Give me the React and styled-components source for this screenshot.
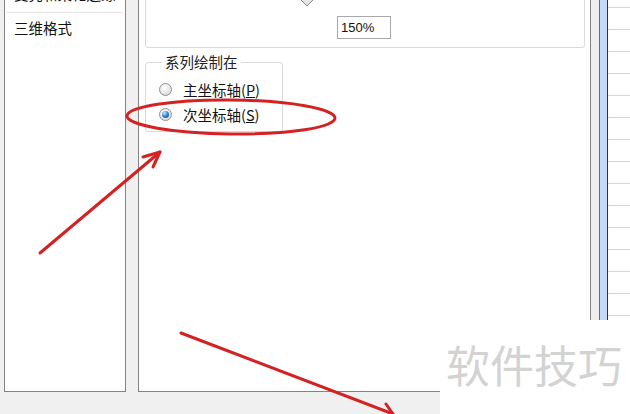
import React from 'react';
import styled, { createGlobalStyle } from 'styled-components';

const GlobalStyle = createGlobalStyle`
  html, body {
    margin: 0;
    padding: 0;
    background: #f0f0f0;
  }
  body {
    font-family: "Noto Sans CJK SC", "Liberation Sans", sans-serif;
  }
`;

const Page = styled.div`
  position: relative;
  width: 630px;
  height: 414px;
  overflow: hidden;
  display: flex;
  align-items: flex-start;
  background: #f0f0f0;
  color: #111;
  font-size: 14px;
`;

const NavPanel = styled.div`
  box-sizing: border-box;
  width: 122px;
  height: 392px;
  margin-left: 4px;
  background: #fff;
  border: 1px solid #838383;
  border-top: none;
  overflow: hidden;
`;

const NavList = styled.ul`
  list-style: none;
  margin: -21px 0 0;
  padding: 0;
`;

const NavItem = styled.li`
  margin: 0 2px;
  padding: 5px 0 ${(p) => (p.$divider ? '8px' : '5px')} 7px;
  line-height: 20px;
  font-size: 14.5px;
  white-space: nowrap;
  border-bottom: 1px solid ${(p) => (p.$divider ? '#e4e4e4' : 'transparent')};
`;

const ContentPanel = styled.div`
  box-sizing: border-box;
  width: 453px;
  height: 392px;
  margin-left: 12px;
  background: #fff;
  border: 1px solid #838383;
  border-top: none;
  display: flex;
  flex-direction: column;
  align-items: flex-start;
`;

const TopGroup = styled.div`
  box-sizing: border-box;
  width: 440px;
  margin: -30px 0 0 6px;
  border: 1px solid #d9d9d9;
  border-radius: 3px;
  padding-bottom: 8px;
`;

const SliderRow = styled.div`
  height: 36px;
  padding-left: 154px;
  display: flex;
  align-items: flex-end;
`;

const ValueRow = styled.div`
  margin-top: 9px;
  padding-left: 191px;
`;

const ValueInput = styled.div`
  box-sizing: border-box;
  width: 54px;
  height: 23px;
  border: 1px solid #a9a9a9;
  padding: 0 3px;
  font-family: "Liberation Sans", Arial, sans-serif;
  font-size: 13px;
  line-height: 21px;
`;

const SeriesGroup = styled.fieldset`
  box-sizing: border-box;
  width: 138px;
  margin: 6px 0 0 6px;
  padding: 7px 0 4px 13px;
  border: 1px solid #d9d9d9;
  border-radius: 3px;
`;

const GroupLegend = styled.legend`
  margin-left: 3px;
  padding: 0 3px;
  line-height: 16px;
  font-size: 14.5px;
  color: #222;
`;

const RadioRow = styled.label`
  display: flex;
  align-items: center;
  height: 25px;
  gap: 11px;
  font-size: 14.5px;
  white-space: nowrap;
`;

const RadioDot = styled.span`
  box-sizing: border-box;
  width: 13px;
  height: 13px;
  border-radius: 50%;
  border: 1px solid #8e8f8f;
  background: radial-gradient(circle at 40% 35%, #ffffff 0%, #e8e8e8 55%, #c9c9c9 100%);
  display: flex;
  align-items: center;
  justify-content: center;

  &::after {
    content: '';
    width: 7px;
    height: 7px;
    border-radius: 50%;
    display: ${(p) => (p.$checked ? 'block' : 'none')};
    background: radial-gradient(circle at 35% 30%, #c4ecff 0%, #2d86c8 50%, #0b3866 100%);
  }
`;

const Key = styled.span`
  text-decoration: underline;
`;

const Gutter = styled.div`
  width: 8px;
  height: 414px;
  background: #eeeeee;
`;

const SheetEdge = styled.div`
  box-sizing: border-box;
  width: 9px;
  height: 414px;
  background: #c4daf4;
  border-left: 1px solid #6e6e6e;
  border-right: 1px solid #1f3838;
`;

const SheetGrid = styled.div`
  flex: 1;
  height: 414px;
  background-color: #fff;
  background-image: repeating-linear-gradient(
    to bottom,
    transparent 0 21px,
    #d6d6d6 21px 22px
  );
  background-position: 0 -14px;
`;

const Watermark = styled.div`
  position: absolute;
  left: 440px;
  top: 320px;
  width: 190px;
  height: 94px;
  box-sizing: border-box;
  padding: 20px 0 0 6px;
  background: #fff;
  color: #d3d3d3;
  font-size: 44px;
  line-height: 48px;
  white-space: nowrap;
`;

const Marks = styled.svg`
  position: absolute;
  left: 0;
  top: 0;
  pointer-events: none;
`;

const SliderThumb = () => (
  <svg width="14" height="16" viewBox="0 0 14 16">
    <path d="M1 0.5 H13 V9 L7 15 L1 9 Z" fill="#e6e6e6" stroke="#8a8a8a" strokeWidth="1" />
  </svg>
);

const App = () => {
  return (
    <>
      <GlobalStyle />
      <Page>
        <NavPanel>
          <NavList>
            <NavItem $divider>变亮和柔化边缘</NavItem>
            <NavItem>三维格式</NavItem>
          </NavList>
        </NavPanel>

        <ContentPanel>
          <TopGroup>
            <SliderRow>
              <SliderThumb />
            </SliderRow>
            <ValueRow>
              <ValueInput>150%</ValueInput>
            </ValueRow>
          </TopGroup>

          <SeriesGroup>
            <GroupLegend>系列绘制在</GroupLegend>
            <RadioRow>
              <RadioDot />
              <span>主坐标轴(<Key>P</Key>)</span>
            </RadioRow>
            <RadioRow>
              <RadioDot $checked />
              <span>次坐标轴(<Key>S</Key>)</span>
            </RadioRow>
          </SeriesGroup>
        </ContentPanel>

        <Gutter />
        <SheetEdge />
        <SheetGrid />

        <Watermark>软件技巧</Watermark>

        <Marks width="630" height="414" viewBox="0 0 630 414">
          <g fill="none" stroke="#d42222" strokeWidth="3" strokeLinecap="round" strokeLinejoin="round">
            <ellipse cx="231" cy="117" rx="104" ry="17" transform="rotate(0.6 231 117)" />
            <path d="M40 253 L160 152" />
            <path d="M143 157 L160 152 L153 167" />
            <path d="M181 333 L393 414" />
            <path d="M386 404 L393 414" />
          </g>
        </Marks>
      </Page>
    </>
  );
};

export default App;
